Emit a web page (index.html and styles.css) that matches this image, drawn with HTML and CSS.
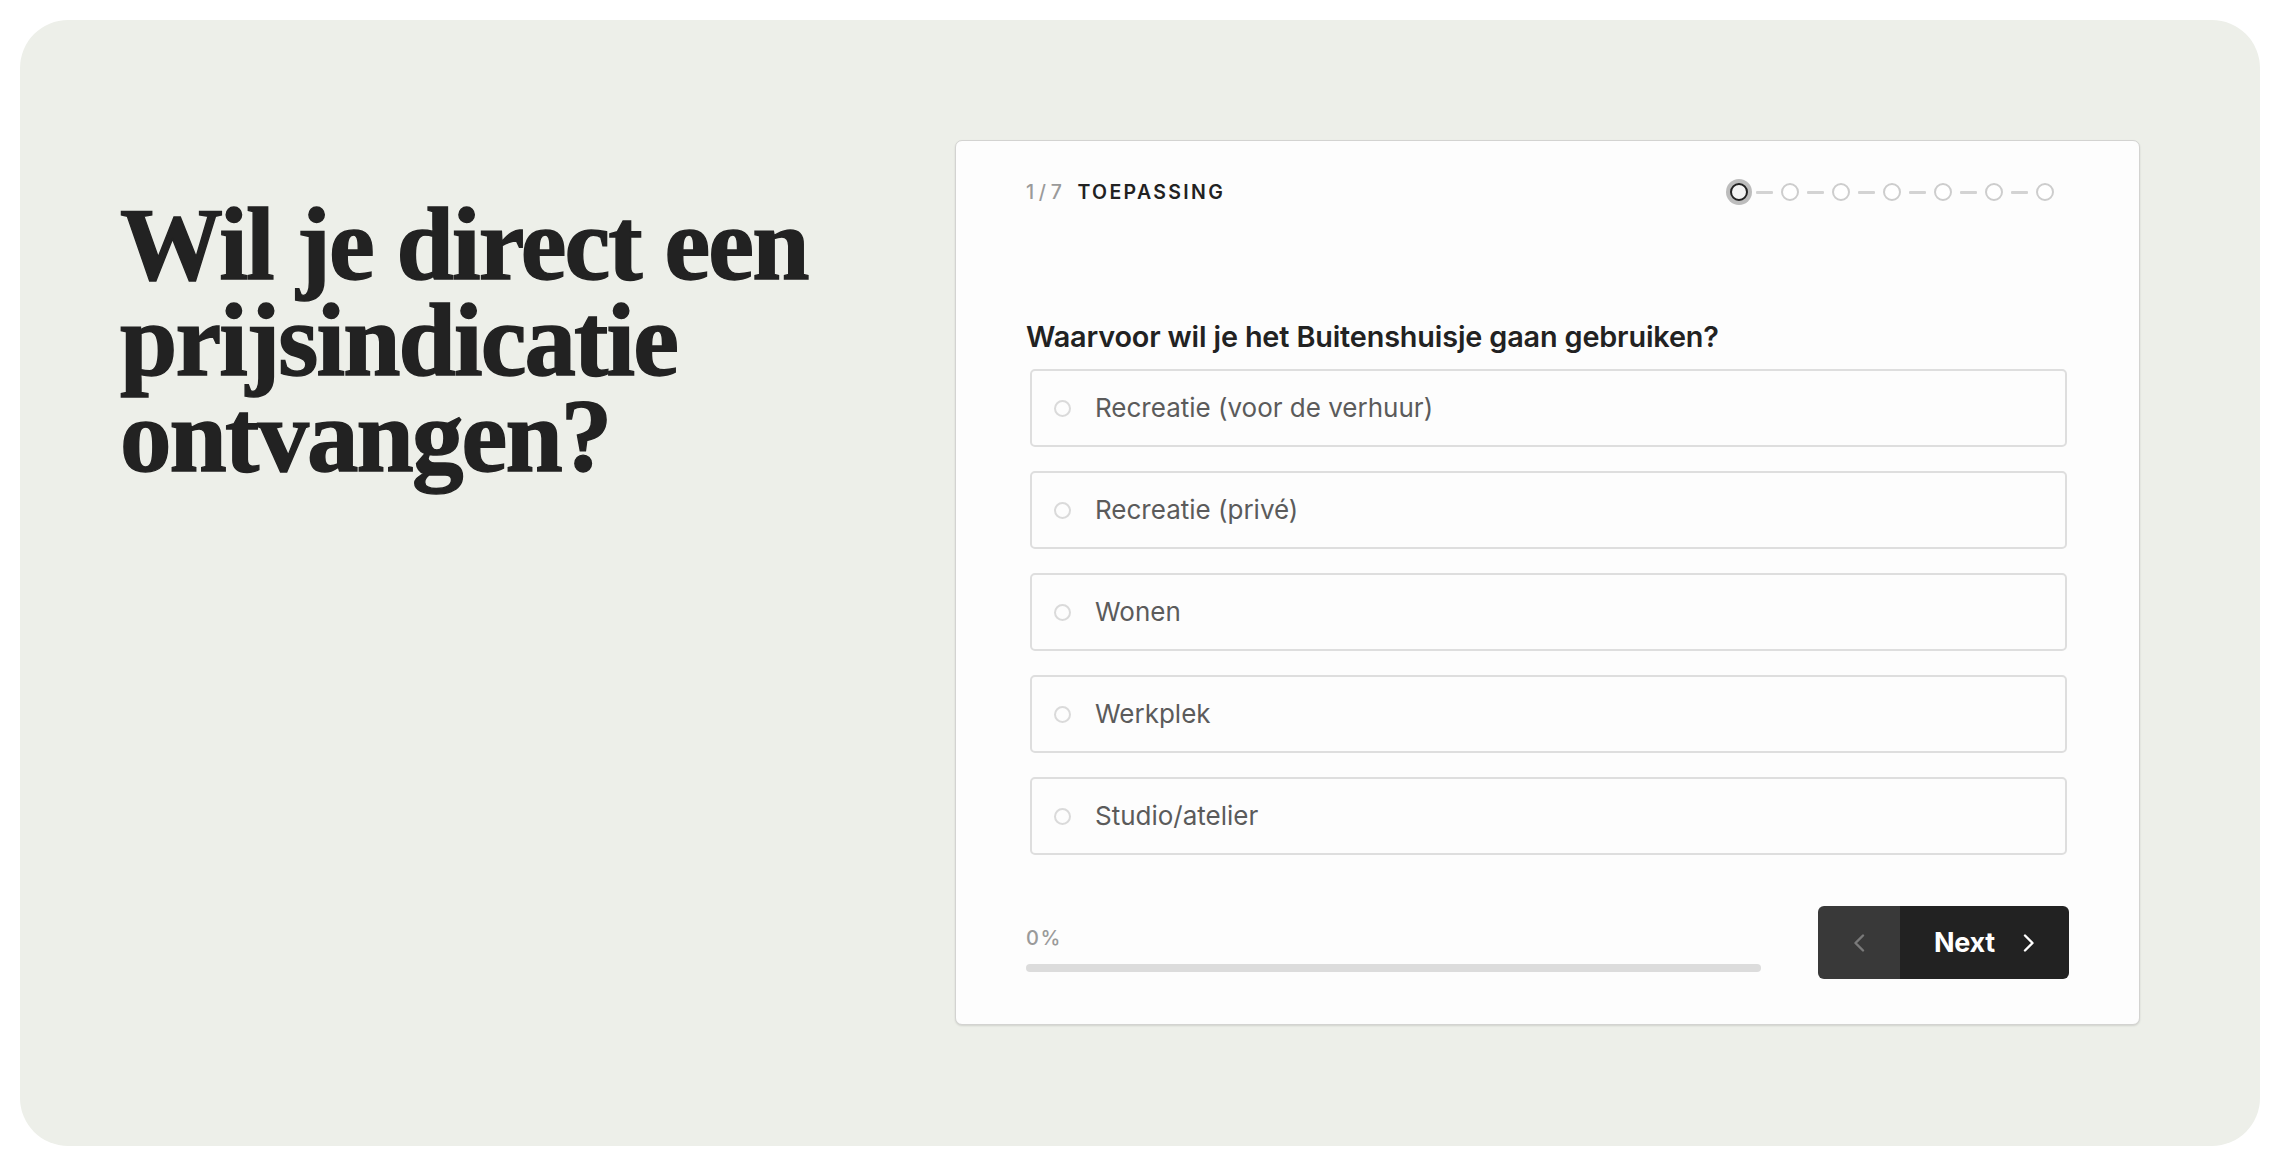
FILE: index.html
```html
<!DOCTYPE html>
<html lang="nl">
<head>
<meta charset="utf-8">
<title>Prijsindicatie</title>
<link rel="stylesheet" href="styles.css">
</head>
<body>
<main class="panel">
  <h1 class="headline">Wil je direct een<br>prijsindicatie<br>ontvangen?</h1>
  <section class="card">
    <header class="card-head">
      <div class="step-label"><span class="step-count">1/7</span><span class="step-name">TOEPASSING</span></div>
      <div class="stepper">
        <span class="dot dot-active"></span><span class="dash"></span>
        <span class="dot"></span><span class="dash"></span>
        <span class="dot"></span><span class="dash"></span>
        <span class="dot"></span><span class="dash"></span>
        <span class="dot"></span><span class="dash"></span>
        <span class="dot"></span><span class="dash"></span>
        <span class="dot"></span>
      </div>
    </header>
    <h2 class="question">Waarvoor wil je het Buitenshuisje gaan gebruiken?</h2>
    <ul class="options">
      <li class="option"><span class="radio"></span><span class="option-text">Recreatie (voor de verhuur)</span></li>
      <li class="option"><span class="radio"></span><span class="option-text">Recreatie (privé)</span></li>
      <li class="option"><span class="radio"></span><span class="option-text">Wonen</span></li>
      <li class="option"><span class="radio"></span><span class="option-text">Werkplek</span></li>
      <li class="option"><span class="radio"></span><span class="option-text">Studio/atelier</span></li>
    </ul>
    <footer class="card-foot">
      <div class="progress">
        <span class="progress-label">0%</span>
        <div class="progress-track"></div>
      </div>
      <div class="nav-buttons">
        <button class="btn-prev" type="button" aria-label="Vorige">
          <svg width="12" height="18" viewBox="0 0 12 18"><polyline points="10,1.5 2.5,9 10,16.5" fill="none" stroke="#7a7a7a" stroke-width="2.4" stroke-linecap="round" stroke-linejoin="round"/></svg>
        </button>
        <button class="btn-next" type="button">
          <span>Next</span>
          <svg width="12" height="18" viewBox="0 0 12 18"><polyline points="2,1.5 9.5,9 2,16.5" fill="none" stroke="#ffffff" stroke-width="2.4" stroke-linecap="round" stroke-linejoin="round"/></svg>
        </button>
      </div>
    </footer>
  </section>
</main>
</body>
</html>
```
FILE: styles.css
```css
html, body {
  margin: 0;
  padding: 0;
  background: #ffffff;
}

body {
  padding: 20px;
  font-family: Inter, "Noto Sans", sans-serif;
  color: #222222;
}

.panel {
  box-sizing: border-box;
  width: 2240px;
  height: 1126px;
  background: #edefe9;
  border-radius: 48px;
  padding: 120px 120px 120px 100px;
  display: flex;
  justify-content: space-between;
  align-items: flex-start;
}

.headline {
  margin: 56px 0 0 0;
  font-family: "Liberation Serif", "Times New Roman", serif;
  font-weight: 700;
  font-size: 103px;
  line-height: 96px;
  letter-spacing: -1.9px;
  color: #222222;
  -webkit-text-stroke: 1.4px #222222;
}

.card {
  box-sizing: border-box;
  width: 1185px;
  background: #fdfdfd;
  border: 1px solid #d3d3d1;
  border-radius: 7px;
  box-shadow: 0 1px 2px rgba(0, 0, 0, 0.12);
  padding: 37px 70px 45px 70px;
}

.card-head {
  height: 28px;
  display: flex;
  align-items: center;
  justify-content: space-between;
}

.step-label {
  font-size: 19.5px;
  line-height: 24px;
  letter-spacing: 0.12em;
  display: flex;
  gap: 11px;
}

.step-count {
  color: #9a9a9a;
  font-weight: 500;
  letter-spacing: 0.24em;
}

.step-name {
  color: #222222;
  font-weight: 600;
}

.stepper {
  display: flex;
  align-items: center;
  margin-right: 15px;
}

.dot {
  box-sizing: border-box;
  width: 18px;
  height: 18px;
  border: 2px solid #cdcdcd;
  border-radius: 50%;
  background: #ffffff;
}

.dot-active {
  border-color: #222222;
  background: #f3f3f3;
  box-shadow: 0 0 0 4px #bdbdbd;
}

.dash {
  width: 17px;
  height: 3px;
  margin: 0 8px;
  background: #d3d3d3;
  border-radius: 1px;
}

.question {
  margin: 114px 0 15px 0;
  font-size: 28.8px;
  line-height: 34px;
  font-weight: 600;
  color: #222222;
  letter-spacing: -0.005em;
}

.options {
  list-style: none;
  margin: 0 2px 0 4px;
  padding: 0;
  display: flex;
  flex-direction: column;
  gap: 24px;
}

.option {
  box-sizing: border-box;
  height: 78px;
  border: 2px solid #dedede;
  border-radius: 5px;
  background: #fdfdfd;
  display: flex;
  align-items: center;
  padding-left: 22px;
  gap: 24px;
}

.radio {
  box-sizing: border-box;
  width: 17px;
  height: 17px;
  border: 2px solid #dadada;
  border-radius: 50%;
  flex: none;
}

.option-text {
  font-size: 26px;
  line-height: 32px;
  color: #5b5b5b;
}

.card-foot {
  margin-top: 51px;
  display: flex;
  justify-content: space-between;
  align-items: flex-end;
}

.progress {
  width: 735px;
  display: flex;
  flex-direction: column;
  margin-bottom: 7px;
}

.progress-label {
  font-size: 20px;
  line-height: 24px;
  color: #9a9a9a;
  letter-spacing: 0.08em;
  font-weight: 500;
}

.progress-track {
  margin-top: 14px;
  height: 8px;
  border-radius: 4px;
  background: #dcdcdc;
}

.nav-buttons {
  display: flex;
  height: 73px;
  border-radius: 6px;
  overflow: hidden;
}

.btn-prev,
.btn-next {
  border: 0;
  margin: 0;
  font-family: inherit;
  cursor: pointer;
  display: flex;
  align-items: center;
}

.btn-prev {
  width: 82px;
  justify-content: center;
  background: #393939;
}

.btn-next {
  width: 169px;
  justify-content: center;
  gap: 28px;
  background: #222222;
  color: #ffffff;
  font-size: 27px;
  font-weight: 700;
  letter-spacing: -0.01em;
}
```
